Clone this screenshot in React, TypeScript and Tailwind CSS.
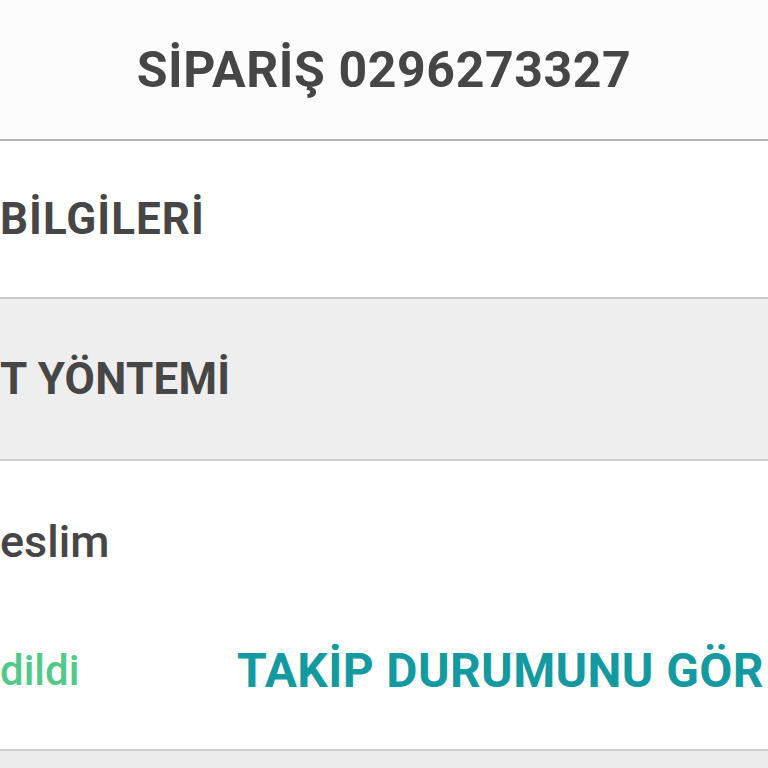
export default function App() {
  return (
    <div className="h-[768px] w-[768px] overflow-hidden bg-white font-['Roboto',sans-serif] text-[#464646]">
      <header className="flex h-[141px] items-center justify-center bg-[#fcfcfc] border-b-2 border-[#b4b4b4]">
        <h1 className="text-[50px] font-bold leading-none tracking-[0.6px]">SİPARİŞ 0296273327</h1>
      </header>

      <section className="flex h-[158px] items-center border-b-2 border-[#c8c8c8] bg-white">
        <h2 className="whitespace-nowrap text-[44px] font-bold leading-none tracking-[1px]">BİLGİLERİ</h2>
      </section>

      <section className="flex h-[162px] items-center border-b-2 border-[#cfcfcf] bg-[#eeeeee]">
        <h2 className="whitespace-nowrap text-[44px] font-bold leading-none tracking-[0.3px]">T YÖNTEMİ</h2>
      </section>

      <section className="flex h-[290px] flex-col border-b-2 border-[#cdcdcd] bg-white">
        <div className="flex h-[160px] items-center">
          <p className="whitespace-nowrap text-[45px] font-medium leading-none">eslim</p>
        </div>
        <div className="flex h-[100px] items-center overflow-hidden">
          <p className="w-[237px] shrink-0 whitespace-nowrap text-[42px] font-medium leading-none text-[#52c98a]">dildi</p>
          <span className="whitespace-nowrap text-[48px] font-bold leading-none tracking-[0.4px] text-[#139aa1]">
            TAKİP DURUMUNU GÖR
          </span>
        </div>
      </section>

      <div className="h-[40px] bg-[#ececec]" />
    </div>
  );
}
